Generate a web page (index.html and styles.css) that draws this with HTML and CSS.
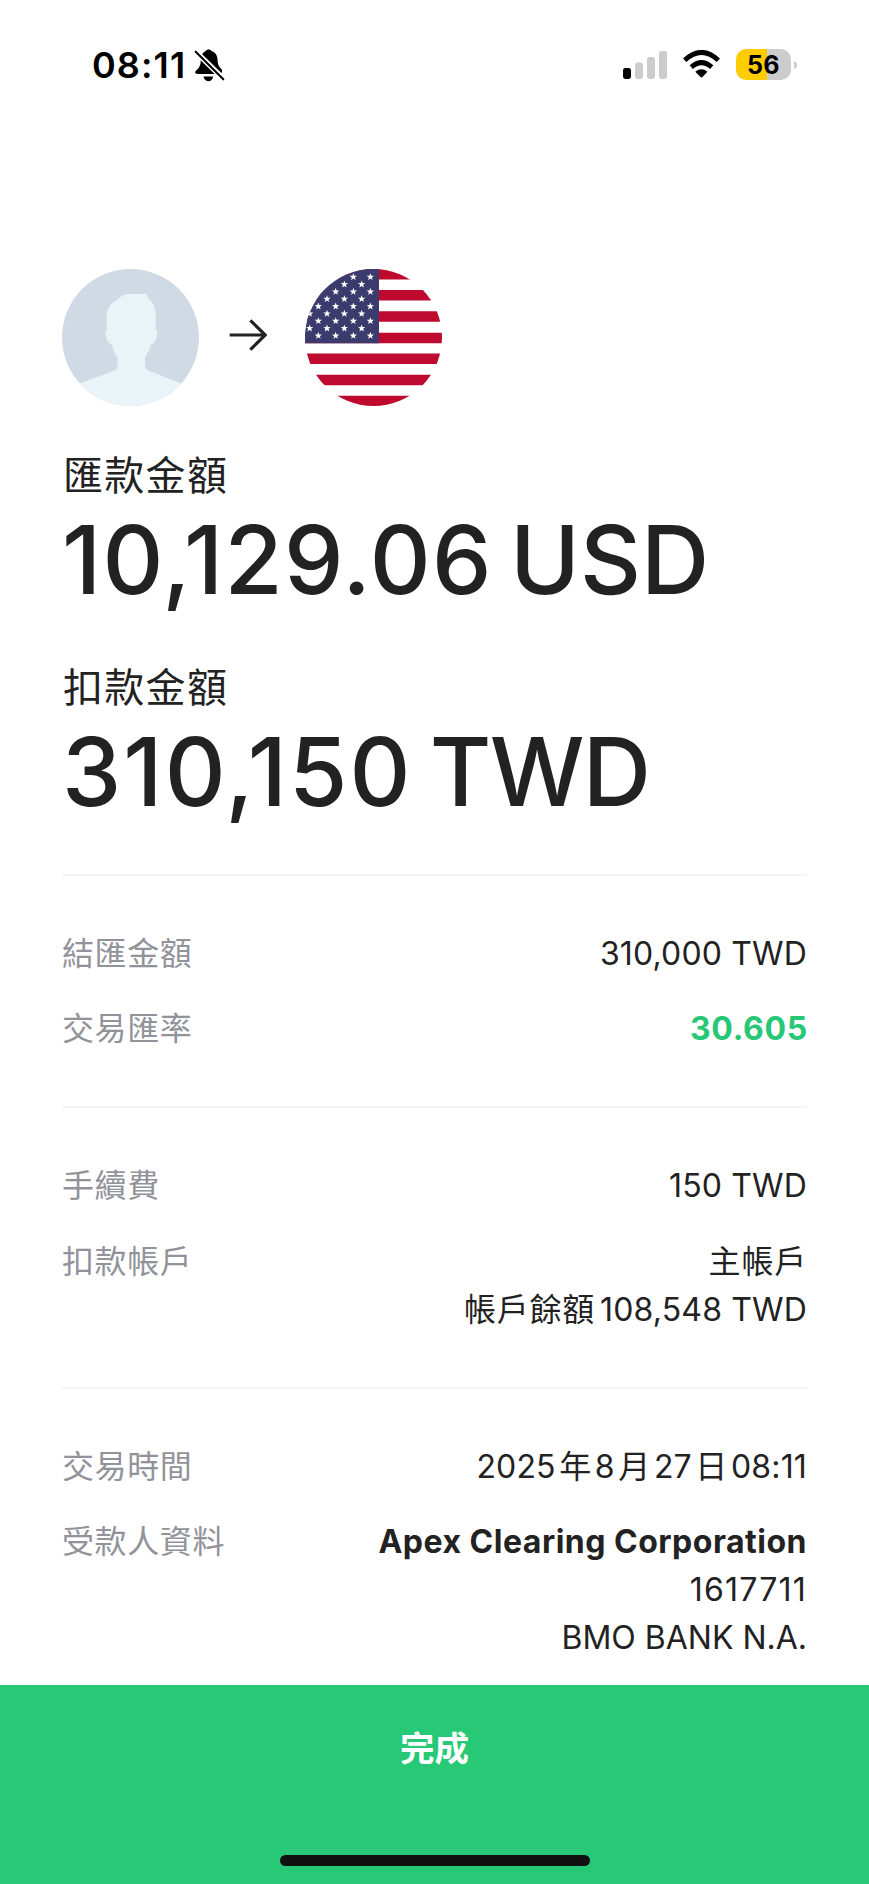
FILE: index.html
```
<!DOCTYPE html>
<html lang="zh-Hant">
<head>
<meta charset="utf-8">
<title>匯款金額</title>
<link rel="stylesheet" href="styles.css">
</head>
<body>
<div class="screen">
  <header class="status">
    <span class="time">08:11</span>
    <svg class="bell" viewBox="342 57 92 98"><path d="M352 118C360 108 362 102 362 88C363 73 371 65 377 63C380 57 391 57 394 63C405 66 412 76 412 91C413 105 416 108 423 116C428 121 425 131 419 131H353C344 131 342 125 352 118Z"/><path d="M370 139H399C397 149 391 153 385 153S372 149 370 139Z"/><path d="M342 60L434 150" stroke="#fff" stroke-width="16"/><path d="M347 65L429 147" stroke="#000" stroke-width="6" stroke-linecap="round"/></svg>
    <svg class="signal" viewBox="0 0 44 28"><rect y="17" width="8" height="11" rx="2.4"/><g fill="#ccc"><rect x="12" y="11.500" width="8" height="16.500" rx="2.400"/><rect x="24" y="6" width="8" height="22" rx="2.400"/><rect x="36" width="8" height="28" rx="2.400"/></g></svg>
    <svg class="wifi" viewBox="218 46 112 85"><g fill="none" stroke="#000" stroke-width="15"><path d="M223 77Q274 30 325 77"/><path d="M243 98Q274 71 305 98"/></g><path d="M255 112Q274 97 292 112L277 128Q274 131 271 128Z"/></svg>
    <div class="battery"><span class="level">56</span></div>
    <svg class="nub" viewBox="0 0 3 8"><path fill="#ccc" d="M0 0Q3 1 3 4T0 8Z"/></svg>
  </header>

  <main class="content">
    <div class="route">
      <svg class="avatar" viewBox="36 42 411 411"><defs><clipPath id="a"><circle cx="241.500" cy="247.500" r="205.500"/></clipPath></defs><g clip-path="url(#a)"><path fill="#d0dae5" d="M36 42h411v411H36z"/><path fill="#eaf3f8" d="M30 411L90 385L188 349Q203 344 203 330V307Q191 292 186 269Q173 265 168 246Q163 226 172 222Q166 178 177 157Q184 143 202 135Q215 119 239 117H294L288 124L296 123L292 129Q309 140 315 160Q320 188 316 222Q324 225 321 242Q316 265 302 269Q298 290 285 306V330Q285 341 297 347L390 384L450 411V460H30Z"/></g></svg>
      <svg class="arrow" viewBox="538 190 114 96"><path d="M540 238H647M602 194L647 238L602 282" fill="none" stroke="#222" stroke-width="9.500"/></svg>
      <svg class="flag" viewBox="45 42 411 411"><defs><clipPath id="f"><circle cx="250.500" cy="247.500" r="205.500"/></clipPath><path id="s" fill="#fff" d="M0-11.500L2.800-3.800L11-3.500L4.600 1.500L6.800 9.300L0 4.800L-6.800 9.300L-4.600 1.500L-11-3.500L-2.800-3.800Z"/></defs>
        <g clip-path="url(#f)"><path fill="#fff" d="M45 42h411v411H45z"/><path fill="#bf0a30" d="M45 42h411v31.600H45zM45 105.200h411v31.600H45zM45 168.500h411v31.600H45zM45 233h411v31.600H45zM45 295.500h411v31.600H45zM45 359h411v31.600H45zM45 422h411v31.600H45z"/><path fill="#3c3b6e" d="M45 42h222v223H45z"/>
        <use href="#s" x="190" y="66"/><use href="#s" x="241" y="66"/><use href="#s" x="163" y="88"/><use href="#s" x="215" y="88"/>
        <use href="#s" x="137" y="110"/><use href="#s" x="190" y="110"/><use href="#s" x="241" y="110"/><use href="#s" x="111" y="132"/><use href="#s" x="163" y="132"/><use href="#s" x="215" y="132"/>
        <use href="#s" x="85" y="154"/><use href="#s" x="137" y="154"/><use href="#s" x="190" y="154"/><use href="#s" x="241" y="154"/><use href="#s" x="59" y="176"/><use href="#s" x="111" y="176"/><use href="#s" x="163" y="176"/><use href="#s" x="215" y="176"/>
        <use href="#s" x="85" y="198"/><use href="#s" x="137" y="198"/><use href="#s" x="190" y="198"/><use href="#s" x="241" y="198"/><use href="#s" x="59" y="220"/><use href="#s" x="111" y="220"/><use href="#s" x="163" y="220"/><use href="#s" x="215" y="220"/>
        <use href="#s" x="85" y="242"/><use href="#s" x="137" y="242"/><use href="#s" x="190" y="242"/><use href="#s" x="241" y="242"/></g></svg>
    </div>

    <section class="total">
      <h2 class="caption">匯款金額</h2>
      <p class="amount usd"><span class="num">10,129.06</span> <span class="cur">USD</span></p>
    </section>
    <section class="total">
      <h2 class="caption">扣款金額</h2>
      <p class="amount twd"><span class="num">310,150</span> <span class="cur">TWD</span></p>
    </section>

    <dl class="details">
      <div class="row"><dt>結匯金額</dt><dd>310,000 TWD</dd></div>
      <div class="row"><dt>交易匯率</dt><dd class="rate">30.605</dd></div>
    </dl>
    <dl class="details account">
      <div class="row"><dt>手續費</dt><dd>150 TWD</dd></div>
      <div class="row"><dt>扣款帳戶</dt><dd><span class="zh">主帳戶</span><br><span class="zh balance">帳戶餘額</span>108,548 TWD</dd></div>
    </dl>
    <dl class="details">
      <div class="row"><dt>交易時間</dt><dd class="date">2025<span class="unit">年</span>8<span class="unit">月</span>27<span class="unit">日</span>08:11</dd></div>
      <div class="row"><dt>受款人資料</dt><dd><strong class="payee">Apex Clearing Corporation</strong><br><span class="acct">1617711</span><br><span class="bank">BMO BANK N.A.</span></dd></div>
    </dl>
  </main>

  <footer class="action">
    <button class="done">完成</button>
    <div class="home"></div>
  </footer>
</div>
</body>
</html>
```
FILE: styles.css
```
* { box-sizing: border-box; margin: 0; padding: 0; }
body { background: #fff; color: #222; font-family: Inter, "Noto Sans CJK TC", sans-serif; }
.screen { width: 869px; height: 1884px; display: flex; flex-direction: column; overflow: hidden; }
svg { display: block; flex: none; }

.status { height: 269px; padding: 44px 71px 0 92px; display: flex; align-items: flex-start; color: #000; }
.time { width: 101px; font-size: 36px; font-weight: 600; line-height: 42px; letter-spacing: 1.1px; white-space: nowrap; }
.bell { width: 31px; height: 33px; margin: 5px 0 0 1px; }
.signal { width: 44px; height: 28px; margin: 7px 0 0 398px; }
.wifi { width: 37px; height: 28px; margin: 6px 0 0 16px; }
.battery { width: 55px; height: 31px; margin: 5px 0 0 16px; border-radius: 10px; background: linear-gradient(90deg, #fc0 57%, #ccc 57%); text-align: center; }
.level { display: block; font-size: 25px; font-weight: 700; line-height: 32px; letter-spacing: 0.3px; }
.nub { width: 3px; height: 8px; margin: 17px 0 0 3px; }

.content { flex: 1; min-height: 0; padding: 0 62px; }
.route { display: flex; align-items: center; height: 137px; }
.avatar, .flag { width: 137px; height: 137px; }
.arrow { width: 38px; height: 32px; margin: -6px 38px 0 30px; }

.total { height: 212px; }
.route + .total { margin-top: 41px; }
.caption { height: 57px; padding-left: 1px; font-size: 40px; line-height: 58px; font-weight: 400; letter-spacing: 1.3px; }
.amount { font-size: 94.5px; font-weight: 500; line-height: 111px; white-space: nowrap; word-spacing: -8px; }
.usd .num { letter-spacing: 1.3px; }
.twd .num { letter-spacing: 2.1px; }
.twd .cur { letter-spacing: -1.8px; }

.details { border-top: 2px solid #f5f5f6; padding: 54px 0 53px; display: flex; flex-direction: column; gap: 27px; }
.total + .details { margin-top: 3px; }
.account { gap: 28px; }
.row { display: flex; justify-content: space-between; font-size: 32px; line-height: 48px; }
dt { color: #92939a; letter-spacing: 0.6px; }
dd { text-align: right; white-space: nowrap; letter-spacing: 0.15px; }
.zh { letter-spacing: 0.8px; }
.balance { margin-right: 5px; }
.unit { margin: 0 3.5px; }
.rate { margin-right: -1px; color: #28c776; font-weight: 700; letter-spacing: 0.7px; }
.payee { font-weight: 700; letter-spacing: 0.5px; }
.acct { letter-spacing: 1.2px; }
.bank { letter-spacing: 0; }

.action { height: 199px; background: #28c976; display: flex; flex-direction: column; align-items: center; justify-content: space-between; padding: 35px 0 18px; }
.done { border: 0; background: none; color: #fff; font: 700 34.5px/52px "Noto Sans CJK TC", sans-serif; }
.home { width: 310px; height: 11px; border-radius: 6px; background: #111; }
```
